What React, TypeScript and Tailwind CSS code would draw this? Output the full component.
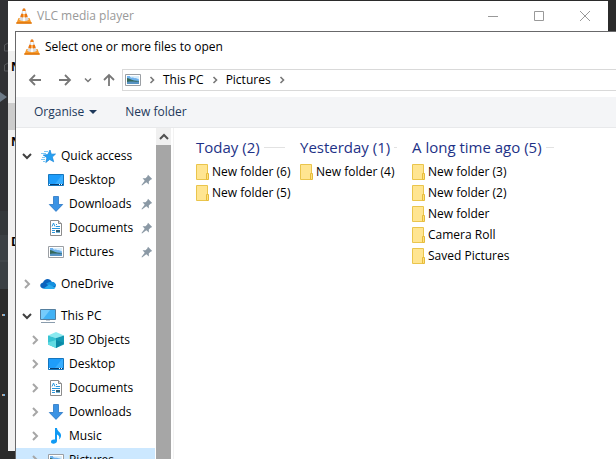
import type { ReactNode } from "react";

type IconProps = { className?: string };

function Cone() {
  return (
    <svg viewBox="0 0 16 16" className="size-4 shrink-0" aria-hidden="true">
      <path d="M2.500 10h11l2.200 5.500H.3z" fill="#f79a2a" />
      <path d="M.3 14.300h15.400v1.400H.3z" fill="#dd7208" />
      <path d="M7 .5h2l3.800 11.300c-1.500 1.800-8 1.800-9.600 0z" fill="#dcdcde" />
      <path d="M7 .5h2l.8 2.500H6.200z" fill="#ee7d17" />
      <path d="M5.300 5.700h5.400l1 3c-1.300 1-6.100 1-7.400 0z" fill="#ec750c" />
      <path d="M7 6h2v3.300H7z" fill="#fdb15c" />
      <path d="M7 3h2v3H7zM7 9.300h2V13H7z" fill="#fafafa" />
    </svg>
  );
}

function PictureIcon() {
  return (
    <svg viewBox="0 0 16 16" className="size-4 shrink-0" aria-hidden="true">
      <path d="M.5 2.500h15v11H.5z" fill="#fff" stroke="#9b9fa4" />
      <path d="M2 4h12v8H2z" fill="#6fb1ec" />
      <path d="M5 4h9v3.500C10 5 8 7 5 5z" fill="#d8edfb" />
      <path d="M2 6c3 0 4 3 12 3v1.500H2z" fill="#35695b" />
      <path d="M2 10c4-1 8 0 12-.5V12H2z" fill="#5793c4" />
    </svg>
  );
}

function StarIcon() {
  return (
    <svg viewBox="0 0 16 16" className="size-4 shrink-0" aria-hidden="true">
      <path d="M4 3.500h4M1 5.500h5M3 7.500h3M2 9.500h3M1 11.500h4M3 13.500h2" stroke="#7cc8f5" />
      <path d="m10 2 1.300 4.200 4.200-.2-3.200 3.100 1.400 4.700-4-2.300-3.900 3 1.100-4.700L3.500 7l4.300-.4z" fill="#26a0f2" stroke="#1584d8" strokeWidth=".7" />
    </svg>
  );
}

function DesktopIcon() {
  return (
    <svg viewBox="0 0 16 16" className="size-4 shrink-0" aria-hidden="true">
      <path d="M.5 2.500h15v11H.5z" fill="#1e9dfb" stroke="#1676bd" />
      <path d="M7 12 14 3h1v9z" fill="#38aeff" />
      <path d="M1 12h14v1H1z" fill="#083c70" />
      <path d="M1 12.500h1M11 12.500h1M13 12.500h1" stroke="#fff" />
    </svg>
  );
}

function DownloadIcon() {
  return (
    <svg viewBox="0 0 16 16" className="size-4 shrink-0" aria-hidden="true">
      <path d="M5.500.5h5v8h4.200L8 15.400 1.300 8.500h4.200z" fill="#3b93e4" stroke="#2a76c4" strokeWidth=".8" />
    </svg>
  );
}

function DocumentIcon() {
  return (
    <svg viewBox="0 0 16 16" className="size-4 shrink-0" aria-hidden="true">
      <path d="M2.500.5h8l3 3v12h-11z" fill="#fff" stroke="#8c8c8c" />
      <path d="M10.500.5v3h3" fill="#ddd" stroke="#8c8c8c" />
      <path d="M4 6.500 5.500 3 7 6.500M8 4.500h1M8 6.500h4M4 8.500h8M4 10.500h3M4 12.500h3" fill="none" stroke="#2a97dd" />
      <path d="M8 10h4v2H8z" fill="#315f72" />
      <path d="M8 12.500h4" stroke="#76b4d8" />
    </svg>
  );
}

function CloudIcon() {
  return (
    <svg viewBox="0 0 16 16" className="size-4 shrink-0" aria-hidden="true">
      <path d="M3 12.500C-.5 12-.8 7.500 3 6.600 4.500 2 10 1.500 11.800 6c4.500 0 5.500 5.500 1.500 6.500z" fill="#0a62bd" />
      <path d="M6 7.500 9.500 6c4-.8 6.500 1.200 6.500 4L9 10z" fill="#1490df" />
      <path d="m3 13 6-4.500 6.500 3c-.7 1.200-1.400 1.500-2.500 1.500z" fill="#2aabed" />
    </svg>
  );
}

function ComputerIcon() {
  return (
    <svg viewBox="0 0 16 16" className="size-4 shrink-0" aria-hidden="true">
      <path d="M.5 1.500h15v10H.5z" fill="#42b2f5" stroke="#557f9f" />
      <path d="M1 2h9L3 11H1z" fill="#75cbfb" />
      <path d="M6 12h4v1H6z" fill="#c5ced7" />
      <path d="M1 14.500h14" stroke="#8a9cad" />
    </svg>
  );
}

function CubeIcon() {
  return (
    <svg viewBox="0 0 16 16" className="size-4 shrink-0" aria-hidden="true">
      <path d="M0 3.500 8 0l8 3.500L8 6z" fill="#8beaf0" />
      <path d="M0 3.500 8 6v10l-8-3.500z" fill="#38c3d2" />
      <path d="m16 3.500-8 2.500v10l8-3.500z" fill="#149ab4" />
      <path d="M0 10.500 8 8v8l-8-3.500z" fill="#62dbe2" />
      <path d="m8 8 8 3-8 5z" fill="#0b89a6" />
    </svg>
  );
}

function MusicIcon() {
  return (
    <svg viewBox="0 0 16 16" className="size-4 shrink-0" aria-hidden="true">
      <path d="M7 0h2c0 3.500 4.500 4 4 8-.2 1.700-1 2.800-2 3.500.8-3-.2-4-2-5V13c0 3-6 4-6 .8 0-2 2.200-2.800 4-2.200z" fill="#109af4" />
    </svg>
  );
}

function FolderIcon() {
  return (
    <svg viewBox="0 0 13 16" className="h-4 w-[13px] shrink-0" aria-hidden="true">
      <path d="M.5.5h11v15H.5z" fill="#ffe591" stroke="#eac54c" />
      <path d="M10.500 9.500h2v6h-2z" fill="#ffe27e" stroke="#e6bb3b" />
    </svg>
  );
}

function PinIcon() {
  return (
    <svg viewBox="0 0 12 12" className="size-3 shrink-0" aria-label="Pinned" role="img">
      <path d="M7 .8 11.200 5l-1.600.7-1.800 1.800.1 2.900L5.300 8.300 1 11.500.5 11l3.200-4.300L1.600 4.200l2.900.1L6.300 2.500z" fill="#8b99a5" />
    </svg>
  );
}

function Chevron({ className = "" }: IconProps) {
  return (
    <svg viewBox="0 0 10 10" className={"size-[10px] shrink-0 " + className} aria-hidden="true">
      <path d="m3 1 4 4-4 4" fill="none" stroke="currentColor" strokeWidth="2" />
    </svg>
  );
}

function Crumb() {
  return (
    <svg viewBox="0 0 6 8" className="h-2 w-1.5 shrink-0" aria-hidden="true">
      <path d="m1.500 1 3 3-3 3" fill="none" stroke="currentColor" strokeWidth="1.600" />
    </svg>
  );
}

function Arrow({ className = "" }: IconProps) {
  return (
    <svg viewBox="0 0 14 14" className={"size-[14px] " + className} aria-hidden="true">
      <path d="M13 7H2M7 2 2 7l5 5" fill="none" stroke="currentColor" strokeWidth="1.800" />
    </svg>
  );
}

type TreeRowProps = {
  icon: ReactNode;
  label: string;
  level?: 0 | 1;
  state?: "open" | "closed" | "none";
  pinned?: boolean;
  selected?: boolean;
};

function TreeRow({ icon, label, level = 0, state = "none", pinned, selected }: TreeRowProps) {
  return (
    <button
      type="button"
      className={
        "flex h-6 w-full shrink-0 items-center pr-[2px] text-left " +
        (level ? "pl-[14px] " : "pl-[6px] ") +
        (selected ? "bg-[#cce8ff]" : "")
      }
    >
      <span className="flex w-[18px] shrink-0">
        {state === "open" && <Chevron className="rotate-90 text-[#404040]" />}
        {state === "closed" && <Chevron className="text-[#a6a6a6]" />}
      </span>
      {icon}
      <span className="ml-[5px] flex-1 whitespace-nowrap">{label}</span>
      {pinned && <PinIcon />}
    </button>
  );
}

function FileGroup({ title, files, className }: { title: string; files: string[]; className: string }) {
  return (
    <section className={className}>
      <h2 className="flex h-6 items-center gap-1 text-[15px] whitespace-nowrap text-[#1e3287]">
        {title}
        <span className="h-px flex-1 bg-[#e2e2e2]" />
      </h2>
      <ul className="mt-[2px]">
        {files.map((name) => (
          <li key={name}>
            <button type="button" className="flex h-[21px] items-center gap-[3px] whitespace-nowrap">
              <FolderIcon />
              {name}
            </button>
          </li>
        ))}
      </ul>
    </section>
  );
}

function BackgroundStrip() {
  return (
    <svg className="absolute top-0 left-0 h-[459px] w-2" viewBox="0 0 8 459" aria-hidden="true">
      <path d="M0 0h8v235H0z" fill="#303134" />
      <path d="M0 211h8v24H0z" fill="#34383b" />
      <path d="M0 235h8v54H0z" fill="#3b4044" />
      <path d="M0 261h8" stroke="#4a4f52" />
      <path d="M8 43 4.500 45v6H8M8 63l-3.500 2v6H8" fill="none" stroke="#57595c" />
      <path d="m0 92 7 5-7 5z" fill="#6d7a87" />
      <path d="M2 314h1v2H2zM2 394h1v2H2z" fill="#d79b72" />
      <path d="M3 314h2v2H3zM3 394h2v2H3z" fill="#79afd8" />
    </svg>
  );
}

function PlayerWindow() {
  return (
    <div className="absolute top-px right-2 bottom-2 left-2 flex flex-col bg-[#f0f0f0]">
      <header className="flex h-[50px] shrink-0 items-start bg-white">
        <div className="flex h-[30px] flex-1 items-center gap-[5px] pl-2 text-[#999999]">
          <Cone />
          <h1>VLC media player</h1>
        </div>
        <div className="flex text-[#999999]">
          <button type="button" aria-label="Minimise" className="flex h-[30px] w-[46px] items-center justify-center">
            <svg viewBox="0 0 10 10" className="size-[10px]"><path d="M0 5.500h10" stroke="currentColor" /></svg>
          </button>
          <button type="button" aria-label="Maximise" className="flex h-[30px] w-[46px] items-center justify-center">
            <svg viewBox="0 0 10 10" className="size-[10px]"><path d="M.5.5h9v9h-9z" fill="none" stroke="currentColor" /></svg>
          </button>
          <button type="button" aria-label="Close" className="flex h-[30px] w-[46px] items-center justify-center">
            <svg viewBox="0 0 10 10" className="size-[10px]"><path d="m0 0 10 10M10 0 0 10" stroke="currentColor" /></svg>
          </button>
        </div>
      </header>
      <div className="flex flex-col pl-[3px] font-bold">
        <span className="h-8 leading-8">N</span>
      </div>
      <div className="mt-5 h-[27px] shrink-0 bg-[#cccccc]" />
      <div className="flex flex-col gap-[76px] pl-[3px] font-bold">
        <span className="h-6 leading-6">N</span>
        <span className="h-6 leading-6">D</span>
      </div>
    </div>
  );
}

export default function App() {
  return (
    <main className="relative h-screen overflow-hidden bg-[#2b2b2b] font-['Open_Sans','Noto_Sans',sans-serif] text-[12px] leading-4 text-black">
      <BackgroundStrip />
      <PlayerWindow />
      <div role="dialog" aria-label="Select one or more files to open" className="absolute top-[31px] right-0 bottom-0 left-[15px] flex flex-col overflow-hidden border-t border-l border-[#68686a] bg-white">
        <header className="flex h-[30px] shrink-0 items-center gap-[5px] pl-2">
          <Cone />
          <h2>Select one or more files to open</h2>
        </header>

        <div className="flex h-[35px] shrink-0 items-center pl-3 text-[#777777]">
          <button type="button" aria-label="Back"><Arrow /></button>
          <button type="button" aria-label="Forward" className="ml-4"><Arrow className="rotate-180" /></button>
          <button type="button" aria-label="Recent locations" className="ml-3">
            <svg viewBox="0 0 8 8" className="size-2"><path d="m1 2.500 3 3 3-3" fill="none" stroke="currentColor" strokeWidth="1.500" /></svg>
          </button>
          <button type="button" aria-label="Up" className="ml-[10px]"><Arrow className="rotate-90" /></button>
          <nav aria-label="Address" className="ml-1.5 flex h-[22px] flex-1 items-center gap-2 border-y border-l border-[#d9d9d9] pl-[2px]">
            <PictureIcon />
            <Crumb />
            <button type="button" className="text-black">This PC</button>
            <Crumb />
            <button type="button" className="text-black">Pictures</button>
            <Crumb />
          </nav>
        </div>

        <div className="flex h-[31px] shrink-0 items-center gap-7 border-b border-[#e8e9eb] bg-[#f4f5f7] pl-[18px] text-[#1e395b]">
          <button type="button" className="flex items-center gap-[5px]">
            Organise
            <svg viewBox="0 0 8 4" className="h-1 w-2" aria-hidden="true"><path d="M0 0h8L4 4z" fill="currentColor" /></svg>
          </button>
          <button type="button">New folder</button>
        </div>

        <div className="flex min-h-0 flex-1">
          <nav aria-label="Folders" className="flex w-[139px] shrink-0 flex-col gap-2 overflow-hidden pt-4">
            <div>
              <TreeRow icon={<StarIcon />} label="Quick access" state="open" />
              <TreeRow icon={<DesktopIcon />} label="Desktop" level={1} pinned />
              <TreeRow icon={<DownloadIcon />} label="Downloads" level={1} pinned />
              <TreeRow icon={<DocumentIcon />} label="Documents" level={1} pinned />
              <TreeRow icon={<PictureIcon />} label="Pictures" level={1} pinned />
            </div>
            <TreeRow icon={<CloudIcon />} label="OneDrive" state="closed" />
            <div>
              <TreeRow icon={<ComputerIcon />} label="This PC" state="open" />
              <TreeRow icon={<CubeIcon />} label="3D Objects" level={1} state="closed" />
              <TreeRow icon={<DesktopIcon />} label="Desktop" level={1} state="closed" />
              <TreeRow icon={<DocumentIcon />} label="Documents" level={1} state="closed" />
              <TreeRow icon={<DownloadIcon />} label="Downloads" level={1} state="closed" />
              <TreeRow icon={<MusicIcon />} label="Music" level={1} state="closed" />
              <TreeRow icon={<PictureIcon />} label="Pictures" level={1} state="closed" selected />
            </div>
          </nav>
          <div className="ml-px flex w-[15px] shrink-0 flex-col bg-[#a6a6a6]">
            <button type="button" aria-label="Scroll up" className="flex h-[17px] items-center justify-center bg-[#f0f0f0] text-[#505050]">
              <Chevron className="-rotate-90" />
            </button>
          </div>
          <div className="ml-[2px] flex flex-1 items-start gap-[15px] border-l border-[#f2f2f2] pt-[7px] pl-[22px]">
            <FileGroup title="Today (2)" className="w-[89px]" files={["New folder (6)", "New folder (5)"]} />
            <FileGroup title="Yesterday (1)" className="w-[97px]" files={["New folder (4)"]} />
            <FileGroup title="A long time ago (5)" className="w-[142px]" files={["New folder (3)", "New folder (2)", "New folder", "Camera Roll", "Saved Pictures"]} />
          </div>
        </div>
      </div>
    </main>
  );
}
